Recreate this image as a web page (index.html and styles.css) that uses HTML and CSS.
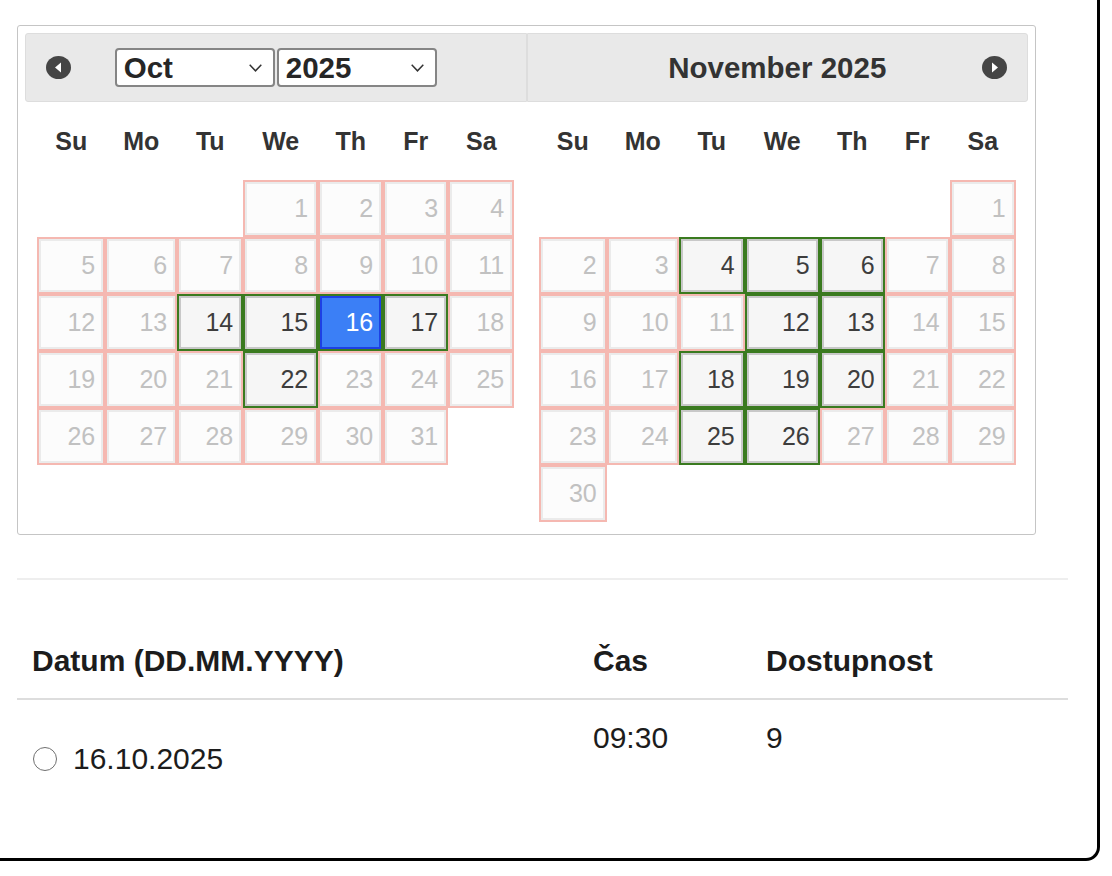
FILE: index.html
```html
<!DOCTYPE html>
<html lang="cs">
<head>
<meta charset="utf-8">
<title>Termíny</title>
<link rel="stylesheet" href="styles.css">
</head>
<body>
<div class="card">
  <div class="datepicker">
    <div class="group">
      <div class="dp-header header-first">
        <a class="nav nav-prev" title="Prev">
          <svg width="25" height="23" viewBox="0 0 25 23"><ellipse cx="12.5" cy="11.5" rx="12.5" ry="11.5" fill="#454545"/><polygon points="9,11.5 15,6.5 15,16.5" fill="#fff"/></svg>
        </a>
        <div class="title">
          <span class="select"><select aria-label="Měsíc"><option>Oct</option></select><svg class="chev" width="13" height="8" viewBox="0 0 13 8"><polyline points="0.7,0.8 6.5,6.8 12.3,0.8" fill="none" stroke="#333" stroke-width="1.5"/></svg></span>
          <span class="select"><select aria-label="Rok"><option>2025</option></select><svg class="chev" width="13" height="8" viewBox="0 0 13 8"><polyline points="0.7,0.8 6.5,6.8 12.3,0.8" fill="none" stroke="#333" stroke-width="1.5"/></svg></span>
        </div>
        <span></span>
      </div>
      <div class="cal">
        <div class="wd">Su</div><div class="wd">Mo</div><div class="wd">Tu</div><div class="wd">We</div><div class="wd">Th</div><div class="wd">Fr</div><div class="wd">Sa</div>
        <div class="day start-4"><span>1</span></div><div class="day"><span>2</span></div><div class="day"><span>3</span></div><div class="day"><span>4</span></div>
        <div class="day"><span>5</span></div><div class="day"><span>6</span></div><div class="day"><span>7</span></div><div class="day"><span>8</span></div><div class="day"><span>9</span></div><div class="day"><span>10</span></div><div class="day"><span>11</span></div>
        <div class="day"><span>12</span></div><div class="day"><span>13</span></div><div class="day ok"><span>14</span></div><div class="day ok"><span>15</span></div><div class="day ok sel"><span>16</span></div><div class="day ok"><span>17</span></div><div class="day"><span>18</span></div>
        <div class="day"><span>19</span></div><div class="day"><span>20</span></div><div class="day"><span>21</span></div><div class="day ok"><span>22</span></div><div class="day"><span>23</span></div><div class="day"><span>24</span></div><div class="day"><span>25</span></div>
        <div class="day"><span>26</span></div><div class="day"><span>27</span></div><div class="day"><span>28</span></div><div class="day"><span>29</span></div><div class="day"><span>30</span></div><div class="day"><span>31</span></div>
      </div>
    </div>
    <div class="group">
      <div class="dp-header header-last">
        <span></span>
        <div class="title">November&nbsp;2025</div>
        <a class="nav nav-next" title="Next">
          <svg width="25" height="23" viewBox="0 0 25 23"><ellipse cx="12.5" cy="11.5" rx="12.5" ry="11.5" fill="#454545"/><polygon points="16,11.5 10,6.5 10,16.5" fill="#fff"/></svg>
        </a>
      </div>
      <div class="cal">
        <div class="wd">Su</div><div class="wd">Mo</div><div class="wd">Tu</div><div class="wd">We</div><div class="wd">Th</div><div class="wd">Fr</div><div class="wd">Sa</div>
        <div class="day start-7"><span>1</span></div>
        <div class="day"><span>2</span></div><div class="day"><span>3</span></div><div class="day ok"><span>4</span></div><div class="day ok"><span>5</span></div><div class="day ok"><span>6</span></div><div class="day"><span>7</span></div><div class="day"><span>8</span></div>
        <div class="day"><span>9</span></div><div class="day"><span>10</span></div><div class="day"><span>11</span></div><div class="day ok"><span>12</span></div><div class="day ok"><span>13</span></div><div class="day"><span>14</span></div><div class="day"><span>15</span></div>
        <div class="day"><span>16</span></div><div class="day"><span>17</span></div><div class="day ok"><span>18</span></div><div class="day ok"><span>19</span></div><div class="day ok"><span>20</span></div><div class="day"><span>21</span></div><div class="day"><span>22</span></div>
        <div class="day"><span>23</span></div><div class="day"><span>24</span></div><div class="day ok"><span>25</span></div><div class="day ok"><span>26</span></div><div class="day"><span>27</span></div><div class="day"><span>28</span></div><div class="day"><span>29</span></div>
        <div class="day"><span>30</span></div>
      </div>
    </div>
  </div>

  <hr class="sep">

  <table class="slots">
    <thead>
      <tr>
        <th class="c-date">Datum (DD.MM.YYYY)</th>
        <th class="c-time">Čas</th>
        <th class="c-avail">Dostupnost</th>
      </tr>
    </thead>
    <tbody>
      <tr>
        <td><label class="opt"><input type="radio" name="termin"> 16.10.2025</label></td>
        <td>09:30</td>
        <td>9</td>
      </tr>
    </tbody>
  </table>
</div>
</body>
</html>
```

FILE: styles.css
```css
html, body {
  margin: 0;
  background: #fff;
}

body {
  font-family: "Liberation Sans", Arial, Helvetica, sans-serif;
}

.card {
  width: 1100px;
  height: 861px;
  box-sizing: border-box;
  border-right: 3px solid #000;
  border-bottom: 3px solid #000;
  border-bottom-right-radius: 14px;
  padding: 25px 29px 0 17px;
}

/* ---------- datepicker ---------- */
.datepicker {
  width: 1019px;
  box-sizing: border-box;
  border: 1px solid #c5c5c5;
  border-radius: 3px;
  padding: 7px;
  display: flex;
  align-items: flex-start;
  color: #333;
}

.group {
  flex: 1 1 0;
  min-width: 0;
}

.dp-header {
  height: 69px;
  box-sizing: border-box;
  border: 1px solid #dddddd;
  background: #e9e9e9;
  display: grid;
  grid-template-columns: 1fr auto 1fr;
  align-items: center;
}

.header-first {
  border-radius: 3px 0 0 3px;
}

.header-last {
  border-radius: 0 3px 3px 0;
}

.nav {
  display: flex;
  width: 25px;
  height: 23px;
  cursor: pointer;
}

.nav-prev {
  justify-self: start;
  margin-left: 20px;
}

.nav-next {
  justify-self: end;
  margin-right: 20px;
}

.title {
  display: flex;
  gap: 2px;
  font-size: 29.5px;
  font-weight: bold;
  color: #333;
  white-space: nowrap;
}

.select {
  display: inline-flex;
  align-items: center;
  width: 160px;
  height: 39px;
  box-sizing: border-box;
  border: 2px solid #858585;
  border-radius: 4px;
  background: #fff;
}

.select select {
  appearance: none;
  -webkit-appearance: none;
  flex: 1 1 auto;
  min-width: 0;
  height: 100%;
  border: 0;
  background: transparent;
  padding: 0 0 0 7px;
  font-family: inherit;
  font-size: 29.5px;
  font-weight: bold;
  color: #262626;
  outline: none;
}

.chev {
  flex: none;
  margin-right: 11px;
}

/* ---------- month grid ---------- */
.cal {
  width: 477px;
  margin: 0 auto 5px;
  display: grid;
  grid-template-columns: 68px 72px 66px 75px 65px 65px 66px;
  grid-template-rows: 78px;
  grid-auto-rows: 57px;
  font-size: 25px;
}

.wd {
  display: flex;
  align-items: center;
  justify-content: center;
  font-weight: bold;
  color: #333;
}

.start-4 {
  grid-column-start: 4;
}

.start-7 {
  grid-column-start: 7;
}

.day {
  box-sizing: border-box;
  border: 2px solid #f5b8b1;
}

.day span {
  display: flex;
  align-items: center;
  justify-content: flex-end;
  height: 100%;
  box-sizing: border-box;
  padding-right: 6px;
  border: 2px solid #ebebeb;
  background: #fcfcfc;
  color: #c1c1c1;
}

.day.ok {
  border-color: #3a7a1f;
}

.day.ok span {
  border-color: #c8c8c8;
  background: #f6f6f6;
  color: #3d3d3d;
}

.day.sel span {
  border-color: #1d40e4;
  background: #3b7ff6;
  color: #fff;
}

/* ---------- slots table ---------- */
.sep {
  margin: 43px 0 0;
  border: 0;
  border-top: 2px solid #eeeeee;
  height: 0;
}

.slots {
  margin-top: 43px;
  width: 100%;
  border-collapse: collapse;
  table-layout: fixed;
  font-size: 30px;
  color: #1c1c1c;
}

.slots th {
  box-sizing: border-box;
  text-align: left;
  font-weight: bold;
  padding: 15px;
  line-height: 45px;
  vertical-align: bottom;
  border-bottom: 2px solid #dddddd;
}

.slots .c-date {
  width: 561px;
}

.slots .c-time {
  width: 173px;
}

.slots td {
  padding: 15px;
  line-height: 45px;
  vertical-align: top;
}

.opt {
  display: flex;
  align-items: center;
  gap: 16px;
  margin-top: 21px;
}

.opt input {
  appearance: none;
  -webkit-appearance: none;
  margin: 0 0 0 1px;
  width: 24px;
  height: 24px;
  box-sizing: border-box;
  border: 1px solid #707070;
  border-radius: 50%;
  background: #fff;
}
```
